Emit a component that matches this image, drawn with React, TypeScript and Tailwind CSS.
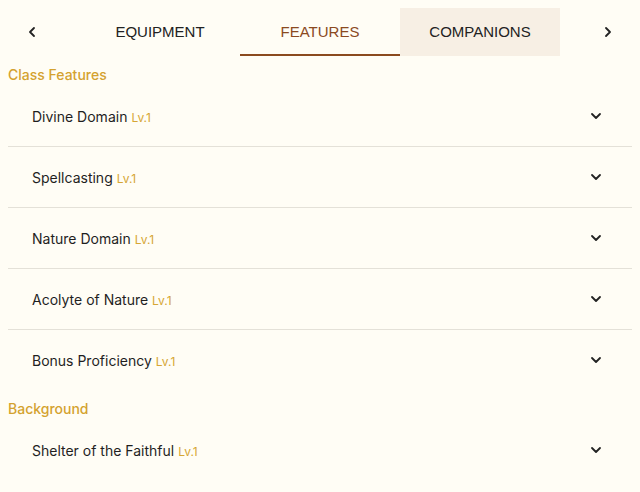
import { ChevronDown, ChevronLeft, ChevronRight } from "lucide-react";

const TABS = ["EQUIPMENT", "FEATURES", "COMPANIONS"];

const SECTIONS = [
  {
    title: "Class Features",
    items: ["Divine Domain", "Spellcasting", "Nature Domain", "Acolyte of Nature", "Bonus Proficiency"],
  },
  {
    title: "Background",
    items: ["Shelter of the Faithful"],
  },
];

function FeatureRow({ name, last }: { name: string; last: boolean }) {
  return (
    <div
      className={`flex items-center justify-between pl-6 pr-[28px] ${
        last ? "h-[60px]" : "h-[61px] border-b border-[#e4e1d8]"
      }`}
    >
      <div className="flex items-baseline gap-1">
        <span className="text-[14px] text-[#1f1f1f]">{name}</span>
        <span className="text-[12px] text-[#d6a634]">Lv.1</span>
      </div>
      <ChevronDown className="h-4 w-4 text-[#222]" strokeWidth={2.75} />
    </div>
  );
}

export default function App() {
  return (
    <div className="h-[492px] w-[640px] overflow-hidden bg-[#fffdf5] font-['Inter',sans-serif]">
      <div className="flex h-14 items-end">
        <button className="flex h-12 w-16 items-center justify-center text-[#222]">
          <ChevronLeft className="h-4 w-4" strokeWidth={2.75} />
        </button>
        <div className="flex flex-1 justify-center">
          {TABS.map((tab) => {
            const active = tab === "FEATURES";
            const hovered = tab === "COMPANIONS";
            return (
              <div
                key={tab}
                className={`flex h-12 w-40 items-center justify-center font-['Liberation_Sans',sans-serif] text-[15px] ${
                  active ? "border-b-2 border-[#8b4a1f] pt-[2px] text-[#8b4a1f]" : "text-[#222]"
                } ${hovered ? "bg-[#f7efe4]" : ""}`}
              >
                {tab}
              </div>
            );
          })}
        </div>
        <button className="flex h-12 w-16 items-center justify-center text-[#222]">
          <ChevronRight className="h-4 w-4" strokeWidth={2.75} />
        </button>
      </div>

      <div className="px-2">
        {SECTIONS.map((section) => (
          <div key={section.title}>
            <h3 className="pt-[8px] pb-[1px] text-[14px] font-medium text-[#d4a22f]">{section.title}</h3>
            {section.items.map((item, i) => (
              <FeatureRow key={item} name={item} last={i === section.items.length - 1} />
            ))}
          </div>
        ))}
      </div>
    </div>
  );
}
